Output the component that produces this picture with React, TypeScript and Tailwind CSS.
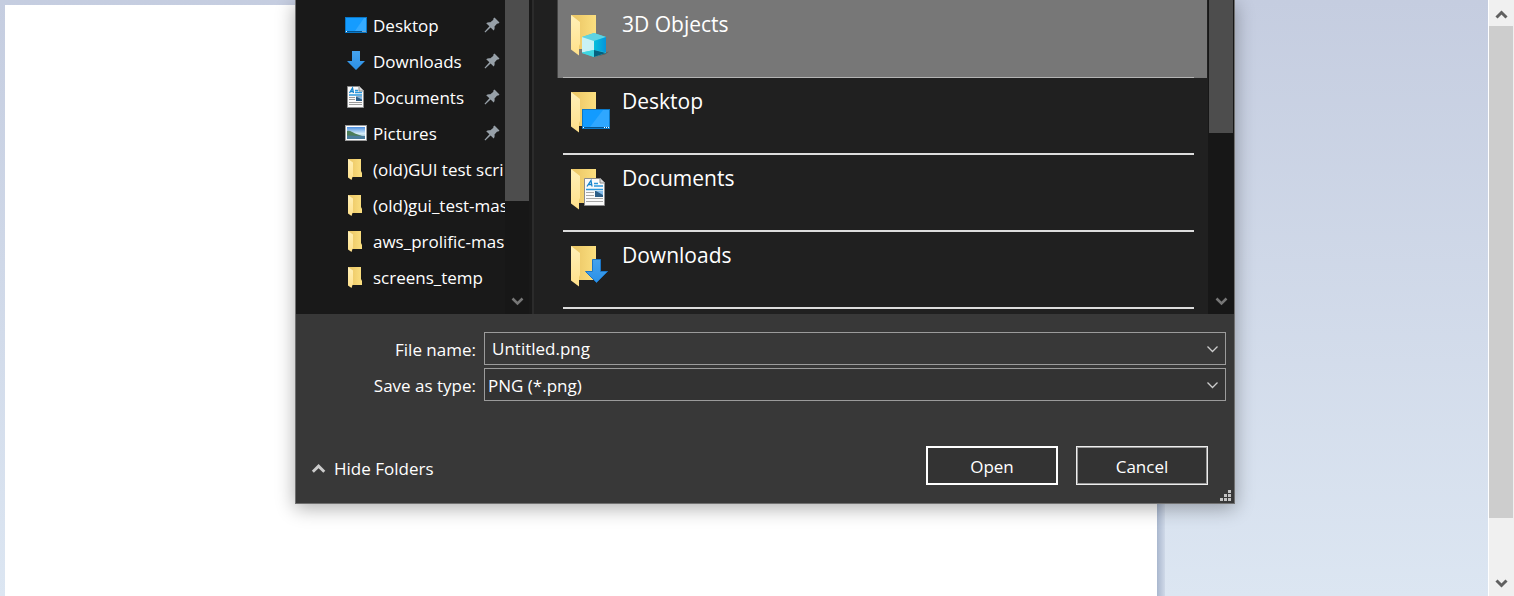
import type { ReactNode } from 'react';

type Kind = 'desktop' | 'downloads' | 'documents' | 'pictures' | 'folder' | 'objects';

const quickAccess: { name: string; kind: Kind; pinned: boolean }[] = [
  { name: 'Desktop', kind: 'desktop', pinned: true },
  { name: 'Downloads', kind: 'downloads', pinned: true },
  { name: 'Documents', kind: 'documents', pinned: true },
  { name: 'Pictures', kind: 'pictures', pinned: true },
  { name: '(old)GUI test scri', kind: 'folder', pinned: false },
  { name: '(old)gui_test-mas', kind: 'folder', pinned: false },
  { name: 'aws_prolific-mas', kind: 'folder', pinned: false },
  { name: 'screens_temp', kind: 'folder', pinned: false },
];

const folders: { name: string; kind: Kind }[] = [
  { name: 'Desktop', kind: 'desktop' },
  { name: 'Documents', kind: 'documents' },
  { name: 'Downloads', kind: 'downloads' },
];

function Gradients() {
  return (
    <svg className="absolute size-0" aria-hidden="true">
      <defs>
        <linearGradient id="back" x1="0" y1="0" x2="1" y2="0">
          <stop offset="0.2" stopColor="#edc968" />
          <stop offset="1" stopColor="#fbdf80" />
        </linearGradient>
        <linearGradient id="flap" x1="0" y1="0" x2="0" y2="1">
          <stop offset="0" stopColor="#fff0b8" />
          <stop offset="1" stopColor="#ffe08a" />
        </linearGradient>
        <linearGradient id="arrow" x1="0" y1="0" x2="0" y2="1">
          <stop offset="0" stopColor="#45a3ee" />
          <stop offset="1" stopColor="#2b90e6" />
        </linearGradient>
        <linearGradient id="sky" x1="0" y1="0" x2="0" y2="1">
          <stop offset="0" stopColor="#4b8fe0" />
          <stop offset="0.55" stopColor="#d6ecf7" />
          <stop offset="1" stopColor="#7aa7bd" />
        </linearGradient>
        <linearGradient id="cubeRight" x1="0" y1="0" x2="1" y2="0">
          <stop offset="0" stopColor="#08bfdc" />
          <stop offset="1" stopColor="#0494dc" />
        </linearGradient>
      </defs>
    </svg>
  );
}

function SmallIcon({ kind }: { kind: Kind }) {
  return (
    <svg className="h-6 w-6 shrink-0" viewBox="0 0 24 24" aria-hidden="true">
      {kind === 'desktop' && (
        <g>
          <rect x="1" y="4" width="22" height="16" fill="#0a78c8" />
          <rect x="2" y="5" width="20" height="13" fill="#159cff" />
          <path d="M22 5v13H11L20 5z" fill="#35aaff" />
          <path d="M2 18.5h20" stroke="#05548f" />
          <path d="M2 18.5h1M18.500 18.500h1M20.500 18.500h1" stroke="#fff" />
        </g>
      )}
      {kind === 'downloads' && <path d="M8 2h8v10h5l-9 9-9-9h5z" fill="url(#arrow)" />}
      {kind === 'documents' && (
        <g>
          <path d="M3.500 1.500h12l4 4v17h-16z" fill="#fafafa" stroke="#8c8c8c" />
          <path d="M15 1.500v4.500h4.500" fill="#ddd" stroke="#8c8c8c" />
          <path d="M5.500 8l3-5 1 5M6.500 6.500h3" fill="none" stroke="#1583cc" strokeWidth="1.300" />
          <path d="M11 5.500h3M11 7.500h7M5 10h13" stroke="#2b97db" strokeWidth="1.300" />
          <path d="M5 12.500h6M5 14.500h6M5 17.500h13M5 19.500h13" stroke="#999" />
          <rect x="12" y="11.500" width="6" height="4.500" fill="#2b5d86" />
          <path d="M13 12h5v2.500z" fill="#83bcea" />
        </g>
      )}
      {kind === 'pictures' && (
        <g>
          <rect x="1.500" y="4.500" width="21" height="15" fill="#fff" stroke="#9a9a9a" />
          <rect x="3" y="6" width="18" height="12" fill="url(#sky)" />
          <path d="M3 10c3-1 5 1 8 2.500l7 2.500H3z" fill="#4c7d59" />
          <path d="M3 14.500l18 .5v3H3z" fill="#4a7c9b" />
        </g>
      )}
      {kind === 'folder' && (
        <g>
          <path d="M4 2h13v12l1 2v4H8z" fill="url(#back)" />
          <path d="M4 2l5 3.500v13L7.500 23 4 20.500z" fill="url(#flap)" />
        </g>
      )}
    </svg>
  );
}

function LargeIcon({ kind }: { kind: Kind }) {
  return (
    <svg className="h-11 w-11 shrink-0" viewBox="0 0 44 44" aria-hidden="true">
      <path d="M1 1h25v34H6z" fill="url(#back)" />
      <path d="M1 1l9 7v22l-1 2v9.500L1 35.500z" fill="url(#flap)" />
      {kind === 'objects' && (
        <g>
          <path d="M26 42.500l10-4 3-1-4 3z" fill="#5c5c5c" />
          <path d="M24 19l12 4v16l-12 4-12-4V23z" fill="#35cfe0" />
          <path d="M24 19l12 4-12 4-12-4z" fill="#5fd3e2" />
          <path d="M12 23l12 4v9l-12 2.500z" fill="#c9f1f3" />
          <path d="M24 27l12-4v15.500L24 36z" fill="url(#cubeRight)" />
          <path d="M12 38.500L24 36v7l-12-4z" fill="#3fd6e2" />
          <path d="M24 36l12 3-12 4z" fill="#04607f" />
        </g>
      )}
      {kind === 'desktop' && (
        <g>
          <rect x="12" y="18" width="28" height="20" fill="#0a78c8" />
          <rect x="13" y="19" width="26" height="17" fill="#129bff" />
          <path d="M39 19v17H20L33 19z" fill="#2fa7ff" />
          <path d="M13 36.500h26" stroke="#05548f" />
          <path d="M13 36.500h1M34 36.500h1M36 36.500h1M38 36.500h1" stroke="#fff" />
        </g>
      )}
      {kind === 'documents' && (
        <g>
          <path d="M14.500 10.500h16l4 4v23h-20z" fill="#fafafa" stroke="#8c8c8c" />
          <path d="M30 10.500v4.500h4.500" fill="#ddd" stroke="#8c8c8c" />
          <path d="M17 18.500l4-6 1 6M18.500 16.500h3.500" fill="none" stroke="#1583cc" strokeWidth="1.300" />
          <path d="M24 15.500h4M24 18h9M16 21.500h17" stroke="#2b97db" strokeWidth="1.300" />
          <path d="M16 24.500h8M16 27.500h8M16 30.500h17M16 33.500h17" stroke="#a8a8a8" />
          <rect x="25" y="23" width="8" height="6" fill="#2b5d86" />
          <path d="M26 23h7v4z" fill="#83bcea" />
        </g>
      )}
      {kind === 'downloads' && (
        <path d="M22.500 14.500h8v12h7L26.500 37.500 15.500 26.500h7z" fill="url(#arrow)" stroke="#1c76c6" />
      )}
    </svg>
  );
}

function Pin() {
  return (
    <svg className="h-4 w-4 shrink-0" viewBox="0 0 16 16" aria-hidden="true">
      <path
        d="M10.500 0.500l5 5-1.500 1.200-.8-.2-2.700 2.900c.4 1.700 0 3-.8 4.100L6.600 10.400 1.300 15.500.5 14.700 5.400 9.300 2.200 6.200c1.200-1 2.600-1.300 4.200-.9L9.400 2.700 9.200 1.800z"
        fill="#97a0a8"
      />
    </svg>
  );
}

function Chevron({ up = false, className }: { up?: boolean; className: string }) {
  return (
    <svg className={className} viewBox="0 0 14 10" fill="none" stroke="currentColor" aria-hidden="true">
      <path d={up ? 'M2.500 7.500L7.500 2.500 12.500 7.500' : 'M2.500 2.500L7.500 7.500 12.500 2.500'} />
    </svg>
  );
}

function Field({ id, label, children }: { id: string; label: string; children: ReactNode }) {
  return (
    <div className="flex h-[33px] items-center gap-2">
      <label htmlFor={id} className="w-[180px] pt-0.5 text-right leading-6">
        {label}
      </label>
      {children}
    </div>
  );
}

export default function App() {
  return (
    <div className="relative flex h-screen overflow-hidden bg-linear-to-b from-[#c5cde0] to-[#dce6f2] font-['Open_Sans','Noto_Sans',sans-serif] text-[17px] text-white">
      <Gradients />
      <main className="relative flex min-w-0 flex-1 pt-[5px] pr-[323px] pl-[5px]">
        <div className="flex-1 bg-white" />
        <div className="w-2 bg-linear-to-r from-[#a9b7ce] to-[#cfd9e8]" />

        <section
          role="dialog"
          aria-label="Save"
          className="absolute top-0 right-[253px] left-[295px] border-x border-b border-[#707070] bg-[#383838] shadow-[0_4px_18px_rgba(0,0,0,0.33)]"
        >
          <div className="flex h-[314px] overflow-hidden bg-[#202020]">
            <nav className="flex w-[236px] shrink-0 bg-[#191919]">
              <ul className="w-[209px] shrink-0 pt-[7px]">
                {quickAccess.map((item) => (
                  <li key={item.name} className="h-9">
                    <a href="#" className="flex h-9 items-center gap-[5px] pr-[5px] pl-12 whitespace-nowrap">
                      <SmallIcon kind={item.kind} />
                      <span className="flex-1 pt-0.5">{item.name}</span>
                      {item.pinned && <Pin />}
                    </a>
                  </li>
                ))}
              </ul>
              <div className="flex w-6 flex-col items-center justify-between bg-[#171717] pb-2 text-[#777]">
                <div className="h-[201px] w-full bg-[#4d4d4d]" />
                <Chevron className="h-2.5 w-3.5 stroke-[2.500]" />
              </div>
            </nav>
            <div className="w-0.5 bg-[#2b2b2b]" />

            <ul className="min-w-0 flex-1 pl-[23px] text-[21px]">
              <li className="mr-px flex h-[78px] flex-col border-l border-[#444] bg-[#777]">
                <div className="flex flex-1 gap-2 pt-3.5 pl-3">
                  <LargeIcon kind="objects" />
                  <span className="-mt-1 leading-7">3D Objects</span>
                </div>
                <div className="mr-[13px] ml-[5px] h-px bg-[#b4b4b4]" />
              </li>
              {folders.map((folder) => (
                <li
                  key={folder.name}
                  className="mr-3.5 ml-1.5 flex h-[77px] gap-2 border-b-2 border-[#dcdcdc] pt-[13px] pl-[7px]"
                >
                  <LargeIcon kind={folder.kind} />
                  <span className="-mt-1 leading-7">{folder.name}</span>
                </li>
              ))}
            </ul>
            <div className="flex w-[26px] flex-col items-center justify-between bg-[#171717] px-px pb-2 text-[#777]">
              <div className="h-[133px] w-full bg-[#4d4d4d]" />
              <Chevron className="h-2.5 w-3.5 stroke-[2.500]" />
            </div>
          </div>

          <form className="pt-[18px] pb-[18px]" onSubmit={(event) => event.preventDefault()}>
            <div className="flex flex-col gap-[3px] pr-2">
              <Field id="file-name" label="File name:">
                <div className="flex h-full flex-1 items-center border border-[#9b9b9b] bg-[#383838] pr-1.5">
                  <input id="file-name" defaultValue="Untitled.png" className="h-full min-w-0 flex-1 bg-transparent pl-[7px] outline-none" />
                  <button type="button" aria-label="Previous names">
                    <Chevron className="h-2.5 w-3.5 stroke-[1.300] text-[#ccc]" />
                  </button>
                </div>
              </Field>
              <Field id="file-type" label="Save as type:">
                <div className="grid h-full flex-1 items-center border border-[#9b9b9b] bg-[#333]">
                  <select id="file-type" className="col-start-1 row-start-1 h-full w-full appearance-none bg-transparent pt-0.5 pl-[3px] outline-none">
                    <option>PNG (*.png)</option>
                  </select>
                  <Chevron className="pointer-events-none col-start-1 row-start-1 mr-1.5 h-2.5 w-3.5 justify-self-end stroke-[1.300] text-[#ccc]" />
                </div>
              </Field>
            </div>
            <div className="mt-[45px] flex items-center pr-[26px] pl-3.5">
              <button type="button" className="mr-auto flex items-center gap-2 pt-1.5">
                <Chevron up className="h-3 w-4 stroke-[2.500] text-[#ccc]" />
                Hide Folders
              </button>
              <div className="flex gap-[18px]">
                <button type="submit" className="h-[39px] w-[132px] border-2 border-white bg-[#333] pt-0.5">
                  Open
                </button>
                <button type="button" className="h-[39px] w-[132px] border border-[#eee] bg-[#333] pt-0.5 inset-ring inset-ring-[#999]">
                  Cancel
                </button>
              </div>
            </div>
          </form>
          <svg className="absolute right-[3px] bottom-0.5 size-[11px] fill-[#c3c3c3]" viewBox="0 0 11 11" aria-hidden="true">
            <path d="M8 0h3v3H8zM4 4h3v3H4zM8 4h3v3H8zM0 8h3v3H0zM4 8h3v3H4zM8 8h3v3H8z" />
          </svg>
        </section>
      </main>

      <div className="flex w-[26px] flex-col items-center border-x border-l-white border-r-[#f0f0f0] bg-[#f0f0f0] text-[#606060]">
        <div className="flex h-[26px] shrink-0 items-center pt-1">
          <Chevron up className="h-2.5 w-3.5 stroke-3" />
        </div>
        <div className="h-[492px] w-full bg-[#cdcdcd]" />
        <div className="mt-auto flex h-[26px] shrink-0 items-center">
          <Chevron className="h-2.5 w-3.5 stroke-3" />
        </div>
      </div>
    </div>
  );
}
